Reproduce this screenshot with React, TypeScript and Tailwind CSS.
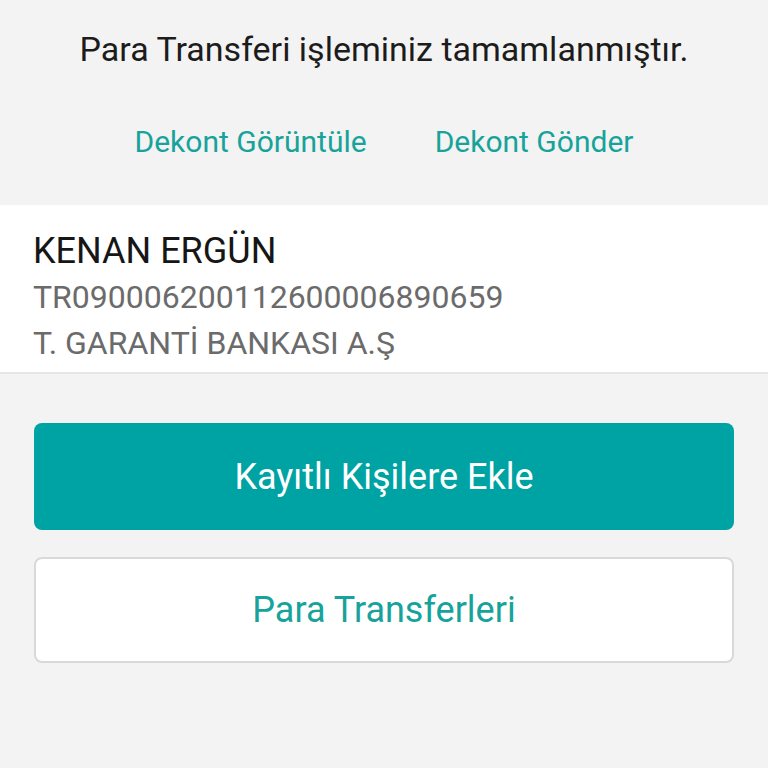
export default function App() {
  return (
    <div className="w-[768px] h-[768px] bg-[#f3f3f3] font-['Roboto',sans-serif]">
      <div className="pt-[28px] text-center text-[34px] leading-[42px] text-[#1c1c1c]">
        Para Transferi işleminiz tamamlanmıştır.
      </div>
      <div className="mt-[54px] flex justify-center gap-[68px] text-[30px] leading-[36px] text-[#17a39b]">
        <span>Dekont Görüntüle</span>
        <span>Dekont Gönder</span>
      </div>
      <div className="mt-[45px] bg-white border-b-2 border-[#e6e6e6] px-[33px] pt-[23px] pb-[6px]">
        <div className="text-[36px] leading-[46px] text-[#161616]">KENAN ERGÜN</div>
        <div className="text-[32px] leading-[46px] text-[#6b6b6b]">TR090006200112600006890659</div>
        <div className="text-[32px] leading-[46px] text-[#6b6b6b]">T. GARANTİ BANKASI A.Ş</div>
      </div>
      <div className="px-[34px] pt-[49px] flex flex-col gap-[27px]">
        <button className="h-[107px] rounded-[8px] bg-[#00a3a3] text-white text-[36px]">
          Kayıtlı Kişilere Ekle
        </button>
        <button className="h-[106px] rounded-[8px] bg-white border-2 border-[#d9d9d9] text-[#17a39b] text-[36px]">
          Para Transferleri
        </button>
      </div>
    </div>
  );
}
